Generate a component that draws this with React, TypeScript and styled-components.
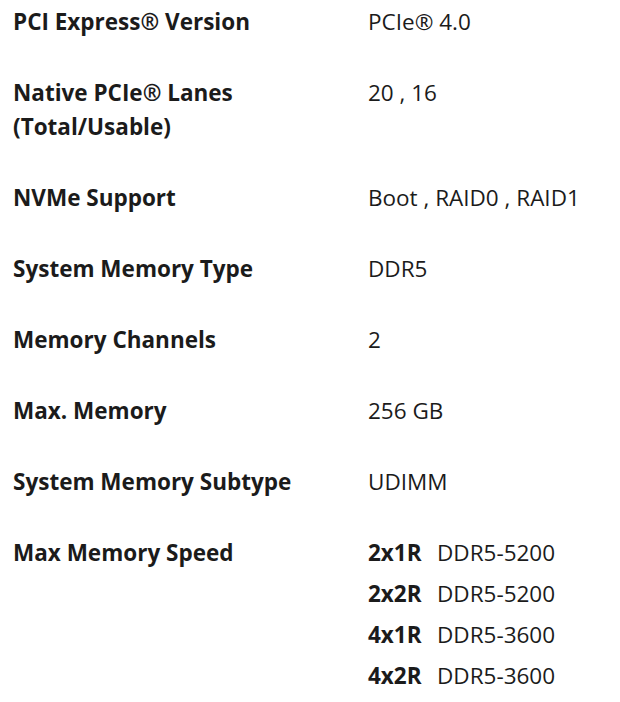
import styled, { createGlobalStyle } from 'styled-components'

const GlobalStyle = createGlobalStyle`
  body {
    margin: 0;
    background: #fff;
    font-family: "Open Sans", "Liberation Sans", sans-serif;
    color: #1b1b1b;
  }
`

type Spec = { label: string; value: string | { cfg: string; speed: string }[] }

const specs: Spec[] = [
  { label: 'PCI Express® Version', value: 'PCIe® 4.0' },
  { label: 'Native PCIe® Lanes (Total/Usable)', value: '20 , 16' },
  { label: 'NVMe Support', value: 'Boot , RAID0 , RAID1' },
  { label: 'System Memory Type', value: 'DDR5' },
  { label: 'Memory Channels', value: '2' },
  { label: 'Max. Memory', value: '256 GB' },
  { label: 'System Memory Subtype', value: 'UDIMM' },
  {
    label: 'Max Memory Speed',
    value: [
      { cfg: '2x1R', speed: 'DDR5-5200' },
      { cfg: '2x2R', speed: 'DDR5-5200' },
      { cfg: '4x1R', speed: 'DDR5-3600' },
      { cfg: '4x2R', speed: 'DDR5-3600' },
    ],
  },
]

export default function App() {
  return (
    <>
      <GlobalStyle />
      <Table>
        {specs.map(spec => (
          <Row key={spec.label}>
            <Label>{spec.label.includes('(') ? (
              <>
                {spec.label.split(' (')[0]}
                <br />({spec.label.split(' (')[1]}
              </>
            ) : spec.label}</Label>
            {typeof spec.value === 'string' ? (
              <Value>{spec.value}</Value>
            ) : (
              <SpeedList>
                {spec.value.map(v => (
                  <SpeedLine key={v.cfg}>
                    <Cfg>{v.cfg}</Cfg>
                    {v.speed}
                  </SpeedLine>
                ))}
              </SpeedList>
            )}
          </Row>
        ))}
      </Table>
    </>
  )
}

const Table = styled.div`
  display: flex;
  flex-direction: column;
  gap: 37px;
  padding: 5px 0 0 13px;
`
const Row = styled.div`
  display: grid;
  grid-template-columns: 355px 1fr;
  font-size: 22.5px;
  line-height: 34px;
`
const Label = styled.div`
  font-weight: 700;
`
const Value = styled.div`
  font-weight: 400;
`
const SpeedList = styled.div`
  display: flex;
  flex-direction: column;
  gap: 7px;
`
const SpeedLine = styled.div`
  display: flex;
`
const Cfg = styled.span`
  font-weight: 700;
  width: 69px;
`
